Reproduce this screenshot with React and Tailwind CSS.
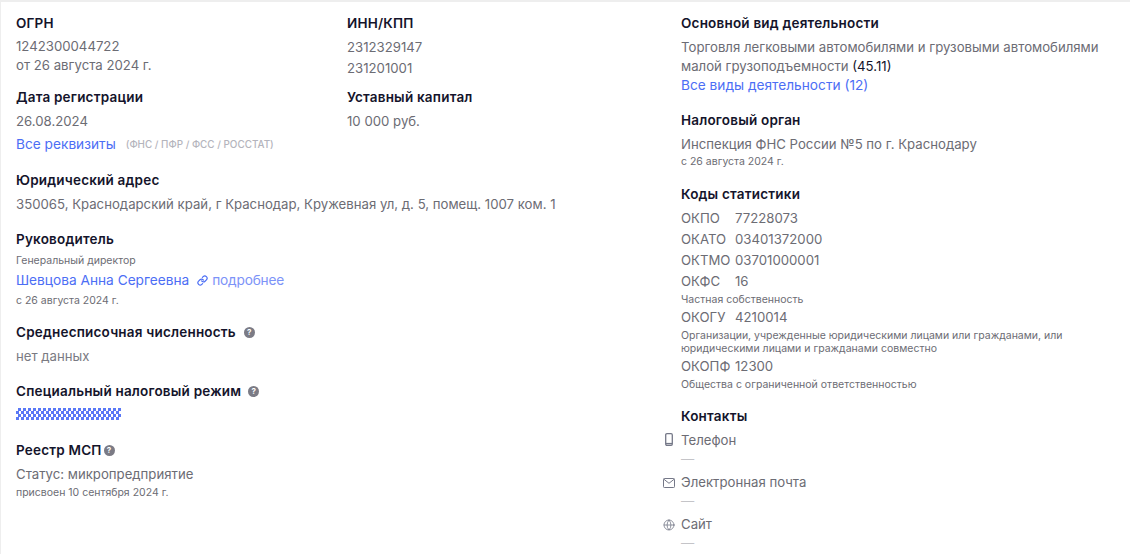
import React from "react";
import { Globe, Link } from "lucide-react";

const font = { fontFamily: "Inter" };

function Title({ children, hint, gap = "ml-2" }) {
  return (
    <div className="flex items-center h-[20px] text-[13.5px] leading-[20px] font-semibold tracking-[0.2px] text-[#14142b]">
      {children}
      {hint && (
        <span className={`${gap} flex items-center justify-center w-[11px] h-[11px] rounded-full bg-[#7b7b85] text-white text-[8px] font-bold leading-none`}>
          ?
        </span>
      )}
    </div>
  );
}

function Code({ name, value }) {
  return (
    <div className="flex h-[21px] items-center">
      <span className="w-[54px]">{name}</span>
      <span>{value}</span>
    </div>
  );
}

function Contact({ icon, label, pad }) {
  return (
    <div className="-ml-[17px] mb-[4px] flex">
      <div className={`w-[17px] shrink-0 text-[#757888] ${pad}`}>{icon}</div>
      <div>
        <div className="h-[21px] leading-[21px]">{label}</div>
        <div className="h-[17px] leading-[17px] text-[#c4c4c8]">—</div>
      </div>
    </div>
  );
}

const PhoneIcon = (
  <svg width="8" height="13" viewBox="0 0 8 13" className="ml-[0.5px]" fill="none" stroke="currentColor">
    <rect x="0.7" y="0.7" width="6.6" height="11.6" rx="1.2" strokeWidth="1.3" />
    <path d="M1 10.6h6" strokeWidth="1.4" />
  </svg>
);

const MailIcon = (
  <svg width="12" height="10" viewBox="0 0 12 10" fill="none" stroke="currentColor" strokeWidth="1" className="-ml-[1px]">
    <rect x="0.5" y="0.5" width="11" height="9" rx="0.8" />
    <path d="M1 1.3l5 4 5-4" />
  </svg>
);

const Small = ({ children, cls = "" }) => (
  <div className={`h-[14px] text-[10.5px] leading-[14px] ${cls}`}>{children}</div>
);

export default function App() {
  return (
    <div className="h-[554px] w-[1130px] overflow-hidden bg-[#eeeeee] pt-[2px] pl-[1px]" style={font}>
      <div className="flex h-full bg-white pl-[15px] pt-[11px] text-[13.2px] text-[#6c6c74]">
        {/* left part */}
        <div className="w-[665px] shrink-0">
          <div className="flex">
            <div className="w-[331px]">
              <Title>ОГРН</Title>
              <div className="mt-[4px] leading-[19px]">1242300044722</div>
              <div className="leading-[19px]">от 26 августа 2024 г.</div>
            </div>
            <div>
              <Title>ИНН/КПП</Title>
              <div className="mt-[4px] leading-[21px]">2312329147</div>
              <div className="leading-[21px]">231201001</div>
            </div>
          </div>
          <div className="mt-[8px] flex">
            <div className="w-[331px]">
              <Title>Дата регистрации</Title>
              <div className="mt-[4px] leading-[20px]">26.08.2024</div>
              <div className="mt-[3px] flex h-[20px] items-center">
                <span className="text-[13.7px] text-[#4c6ef5]">Все реквизиты</span>
                <span className="ml-[10px] text-[9.9px] font-medium text-[#b4b4bc]">(ФНС / ПФР / ФСС / РОССТАТ)</span>
              </div>
            </div>
            <div>
              <Title>Уставный капитал</Title>
              <div className="mt-[4px] leading-[20px]">10 000 руб.</div>
            </div>
          </div>
          <div className="mt-[16px]">
            <Title>Юридический адрес</Title>
            <div className="mt-[4px] leading-[20px]">350065, Краснодарский край, г Краснодар, Кружевная ул, д. 5, помещ. 1007 ком. 1</div>
          </div>
          <div className="mt-[15px]">
            <Title>Руководитель</Title>
            <Small cls="mt-[5px]">Генеральный директор</Small>
            <div className="mt-[2px] flex h-[20px] items-center">
              <span className="text-[13.7px] text-[#4c6ef5]">Шевцова Анна Сергеевна</span>
              <Link size={11} strokeWidth={2.6} className="ml-[8px] text-[#4c6ef5]" />
              <span className="ml-[4px] text-[13.7px] tracking-[-0.2px] text-[#7c93f8]">подробнее</span>
            </div>
            <Small cls="mt-[4px]">с 26 августа 2024 г.</Small>
          </div>
          <div className="mt-[14px]">
            <Title hint>Среднесписочная численность</Title>
            <div className="mt-[4px] leading-[20px] text-[#7a7a82]">нет данных</div>
          </div>
          <div className="mt-[15px]">
            <Title hint gap="ml-[7px]">Специальный налоговый режим</Title>
            <div className="mt-[7px] h-[12px] w-[105px] bg-[repeating-conic-gradient(#5a78f6_0%_25%,#ffffff_0%_50%)] bg-[length:5px_6px]" />
          </div>
          <div className="mt-[20px]">
            <Title hint gap="ml-[2px]">Реестр МСП</Title>
            <div className="mt-[4px] leading-[20px]">Статус: микропредприятие</div>
            <Small cls="mt-[2px]">присвоен 10 сентября 2024 г.</Small>
          </div>
        </div>
        {/* right part */}
        <div className="w-[434px]">
          <Title>Основной вид деятельности</Title>
          <div className="mt-[5px] leading-[19px]">
            Торговля легковыми автомобилями и грузовыми автомобилями малой грузоподъемности <span className="text-[#14142b]">(45.11)</span>
          </div>
          <div className="text-[13.7px] leading-[19px] text-[#4c6ef5]">Все виды деятельности (12)</div>
          <div className="mt-[15px]">
            <Title>Налоговый орган</Title>
            <div className="mt-[4px] leading-[20px]">Инспекция ФНС России №5 по г. Краснодару</div>
            <Small cls="mt-[1px]">с 26 августа 2024 г.</Small>
          </div>
          <div className="mt-[15px]">
            <Title>Коды статистики</Title>
            <div className="mt-[4px]">
              <Code name="ОКПО" value="77228073" />
              <Code name="ОКАТО" value="03401372000" />
              <Code name="ОКТМО" value="03701000001" />
              <Code name="ОКФС" value="16" />
              <Small cls="mt-[1px]">Частная собственность</Small>
              <Code name="ОКОГУ" value="4210014" />
              <div className="mt-[1px] text-[10.5px] leading-[13px]">Организации, учрежденные юридическими лицами или гражданами, или юридическими лицами и гражданами совместно</div>
              <div className="mt-[1px]">
                <Code name="ОКОПФ" value="12300" />
              </div>
              <Small cls="mt-[1px]">Общества с ограниченной ответственностью</Small>
            </div>
          </div>
          <div className="mt-[14px]">
            <Title>Контакты</Title>
            <div className="mt-[4px]">
              <Contact icon={PhoneIcon} label="Телефон" pad="pt-[3px]" />
              <Contact icon={MailIcon} label="Электронная почта" pad="pt-[6px]" />
              <Contact icon={<Globe size={12} strokeWidth={1.6} className="-ml-[1px]" />} label="Сайт" pad="pt-[5px]" />
            </div>
          </div>
        </div>
      </div>
    </div>
  );
}
